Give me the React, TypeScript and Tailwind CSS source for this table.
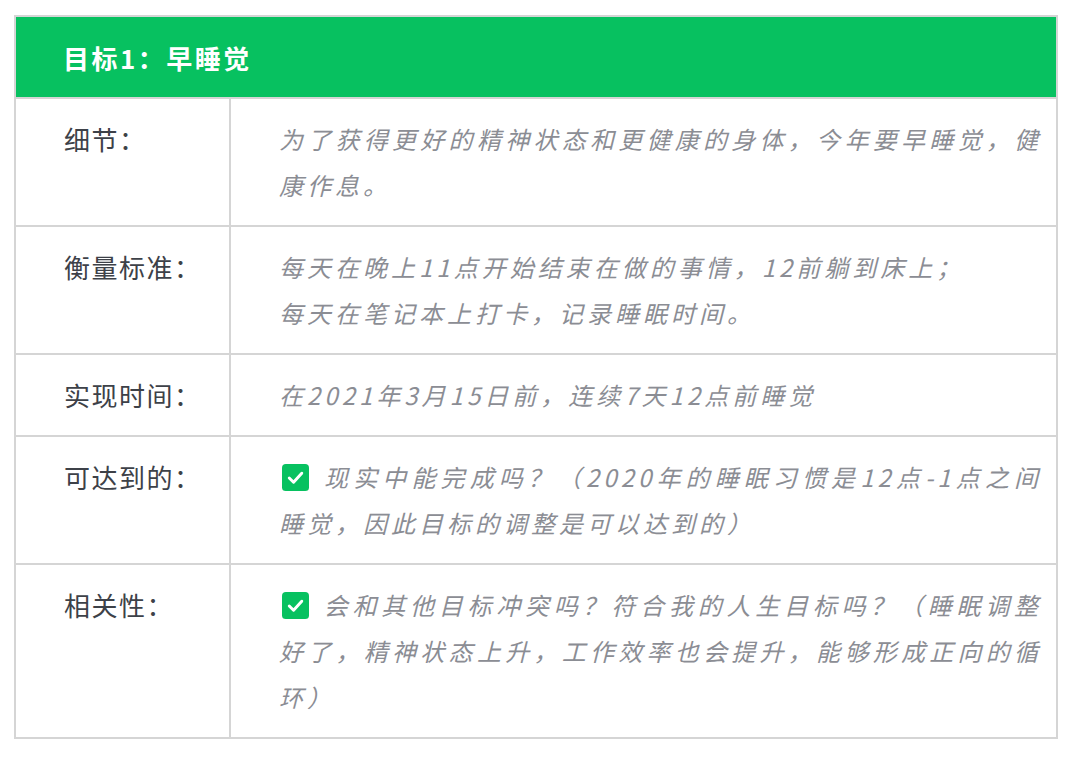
import React from "react"

// Check mark that looks like the ✅ emoji
function Check() {
  return (
    <svg
      viewBox="0 0 28 28"
      className="inline-block w-[27px] h-[27px] ml-[3px] mr-[14px] align-[-4px]"
      aria-hidden
    >
      <rect x="0" y="0" width="28" height="28" rx="4" fill="#07c160" />
      <path d="M7.5 14.5 L12 19 L20.5 9.5" fill="none" stroke="#fff" strokeWidth="3" strokeLinecap="round" strokeLinejoin="round" />
    </svg>
  )
}

interface Row {
  label: string
  value: React.ReactNode
}

const rows: Row[] = [
  {
    label: "细节：",
    value: "为了获得更好的精神状态和更健康的身体，今年要早睡觉，健康作息。",
  },
  {
    label: "衡量标准：",
    value: (
      <>
        每天在晚上11点开始结束在做的事情，12前躺到床上；
        <br />
        每天在笔记本上打卡，记录睡眠时间。
      </>
    ),
  },
  {
    label: "实现时间：",
    value: "在2021年3月15日前，连续7天12点前睡觉",
  },
  {
    label: "可达到的：",
    value: (
      <>
        <Check />
        现实中能完成吗？（2020年的睡眠习惯是12点-1点之间睡觉，因此目标的调整是可以达到的）
      </>
    ),
  },
  {
    label: "相关性：",
    value: (
      <>
        <Check />
        会和其他目标冲突吗？符合我的人生目标吗？（睡眠调整好了，精神状态上升，工作效率也会提升，能够形成正向的循环）
      </>
    ),
  },
]

export default function App() {
  return (
    <div className="w-[1080px] h-[760px] bg-white pt-[15px] pl-[14px] font-['Noto_Sans_CJK_SC',sans-serif]">
      <div className="w-[1044px] border-2 border-[#d5d5d5]">
        <div className="h-[80px] bg-[#07c160] flex items-center pl-[47px] text-white text-[26px] font-bold tracking-[2.5px]">
          目标1：早睡觉
        </div>
        {rows.map((row, i) => (
          <div key={i} className="grid grid-cols-[213px_1fr] border-t-2 border-[#d5d5d5]">
            <div className="pl-[48px] py-[17px] text-[26px] leading-[46px] tracking-[1.5px] text-[#3d4148]">
              {row.label}
            </div>
            <div className="border-l-2 border-[#d5d5d5] pl-[48px] pr-[14px] py-[17px] text-[24px] leading-[46px] italic text-[#8b8d94] text-justify tracking-[4px]">
              {row.value}
            </div>
          </div>
        ))}
      </div>
    </div>
  )
}
